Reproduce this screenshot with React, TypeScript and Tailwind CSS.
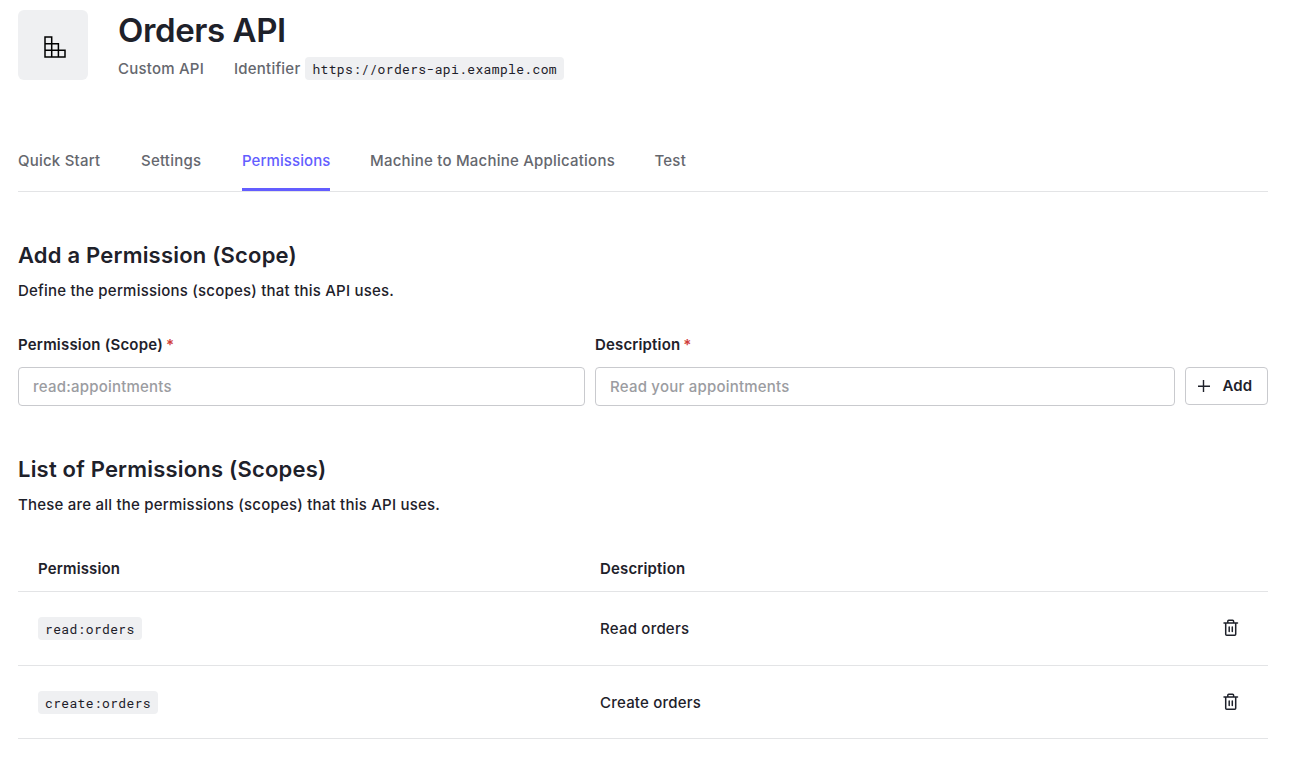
import React from "react";

const tabs = [
  { label: "Quick Start", width: "w-[83px]" },
  { label: "Settings", width: "w-[61px]" },
  { label: "Permissions", width: "w-[88px]", active: true },
  { label: "Machine to Machine Applications", width: "w-[244.5px]" },
  { label: "Test", width: "w-[31px]" },
];

const permissions = [
  { scope: "read:orders", description: "Read orders", height: "h-[74px]" },
  { scope: "create:orders", description: "Create orders", height: "h-[73px]" },
];

function Code({ children }: { children: React.ReactNode }) {
  return (
    <code className="inline-flex h-[23px] items-center rounded-[4px] bg-[#eff0f2] px-[7px] pt-[2px] font-['Roboto_Mono','DejaVu_Sans_Mono','Liberation_Mono',monospace] text-[13px] font-normal tracking-[0.35px] text-[#1e212a]">
      {children}
    </code>
  );
}

function ApiIcon() {
  return (
    <svg className="ml-[4px] mt-[4px]" width="22" height="22" viewBox="0 0 22 22" fill="none" stroke="#000" strokeWidth="1.5">
      <path d="M1 1h6.7v20H1zM1 7.7h13.4V21M1 14.3h20V21H1M7.7 21h13.3" />
    </svg>
  );
}

function TrashIcon() {
  return (
    <svg width="16" height="18" viewBox="0 0 16 18" fill="none" stroke="#1e212a" strokeWidth="1.5" strokeLinecap="round" strokeLinejoin="round">
      <path d="M1 4h13.5M4.8 4V2.2Q4.8 1.3 5.7 1.3h4Q10.6 1.3 10.6 2.2V4M2.7 4V15.2Q2.7 16.2 3.7 16.2h8Q12.7 16.2 12.7 15.2V4M6.2 8v4.5M9.3 8v4.5" />
    </svg>
  );
}

function PlusIcon() {
  return (
    <svg width="12" height="12" viewBox="0 0 12 12" fill="none" stroke="#1e212a" strokeWidth="1.4">
      <path d="M5.5 0v12M0 6.2h12" />
    </svg>
  );
}

const inputClass =
  "mt-[10px] block h-[39px] w-full rounded-[4px] border border-[#c9cace] px-[14px] font-medium tracking-[0.22px] placeholder:text-[#9b9ca1]";

export default function App() {
  return (
    <main className="h-[762px] bg-white pl-[18px] pr-[37px] pt-[10px] font-[Inter,sans-serif] text-[15px] font-medium tracking-[0.22px] text-[#1e212a]">
      <header className="flex h-[126px] gap-[30px]">
        <div className="flex h-[70px] w-[70px] items-center justify-center rounded-[6px] bg-[#eff0f2]">
          <ApiIcon />
        </div>
        <div>
          <h1 className="text-[33px] leading-[41px] font-semibold tracking-[-0.4px]">Orders API</h1>
          <div className="mt-[6px] flex h-[23px] items-center text-[#65676e]">
            <span className="mr-[30px] pt-[2px]">Custom API</span>
            <span className="mr-[5px] pt-[2px]">Identifier</span>
            <Code>https://orders-api.example.com</Code>
          </div>
        </div>
      </header>
      <nav className="flex h-[56px] gap-10 border-b border-[#e3e4e6]">
        {tabs.map((t) => (
          <a key={t.label} className={`${t.width} h-[55px] pt-[13px] leading-[24px] whitespace-nowrap ${t.active ? "border-b-[3px] border-[#635dff] text-[#635dff] tracking-[0.08px]" : "text-[#65676e]"}`}>
            {t.label}
          </a>
        ))}
      </nav>
      <section className="pt-[47px]">
        <h2 className="text-[22px] leading-[32px] font-semibold tracking-[0.2px]">Add a Permission (Scope)</h2>
        <p className="mt-[8px] leading-[24px]">Define the permissions (scopes) that this API uses.</p>
        <form className="mt-[30px] grid grid-cols-[567px_580px_83px] items-end gap-[10px]">
          <label>
            <span className="block leading-[24px] font-semibold tracking-[0.2px]">Permission (Scope)<span className="ml-[3px] text-[#d03c38]">*</span></span>
            <input className={inputClass} placeholder="read:appointments" />
          </label>
          <label>
            <span className="block leading-[24px] font-semibold tracking-[0.15px]">Description<span className="ml-[3px] text-[#d03c38]">*</span></span>
            <input className={inputClass} placeholder="Read your appointments" />
          </label>
          <button className="mb-px flex h-[38px] items-center gap-[12.5px] rounded-[4px] border border-[#c9cace] pl-3 font-semibold tracking-[0.15px]">
            <PlusIcon />
            Add
          </button>
        </form>
      </section>
      <section className="pt-[47px]">
        <h2 className="text-[22px] leading-[32px] font-semibold tracking-[0.2px]">List of Permissions (Scopes)</h2>
        <p className="mt-[8px] leading-[24px]">These are all the permissions (scopes) that this API uses.</p>
        <table className="mt-[30px] w-full table-fixed border-separate border-spacing-0 text-left">
          <thead>
            <tr className="h-[45px]">
              <th className="w-[562px] border-b border-[#e3e4e6] pl-5 font-semibold tracking-[0.15px]">Permission</th>
              <th className="border-b border-[#e3e4e6] pl-5 font-semibold tracking-[0.15px]">Description</th>
              <th className="w-[90px] border-b border-[#e3e4e6]" />
            </tr>
          </thead>
          <tbody>
            {permissions.map((p) => (
              <tr key={p.scope} className={p.height}>
                <td className="border-b border-[#e3e4e6] pt-[25px] pl-5 align-top"><div className="flex"><Code>{p.scope}</Code></div></td>
                <td className="border-b border-[#e3e4e6] pt-[2px] pl-5">{p.description}</td>
                <td className="border-b border-[#e3e4e6] pb-px pl-[45px]">
                  <button className="flex" aria-label="Delete"><TrashIcon /></button>
                </td>
              </tr>
            ))}
          </tbody>
        </table>
      </section>
    </main>
  );
}
